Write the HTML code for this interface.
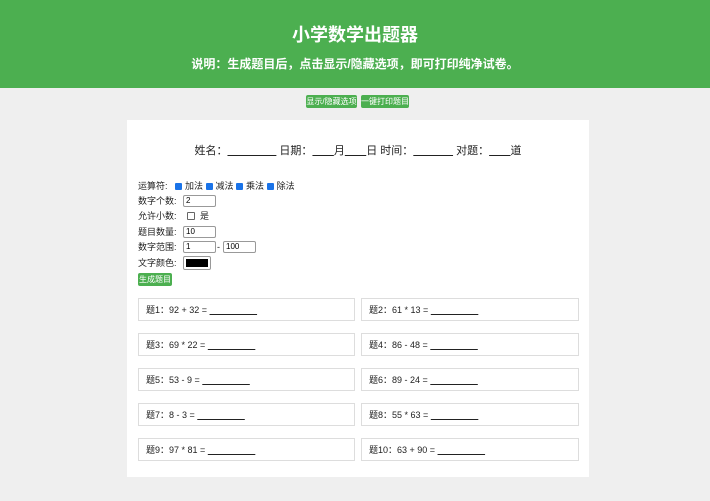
<!DOCTYPE html><html><head><meta charset="utf-8"><style>
body{margin:0;background:#efefef;font-family:"Liberation Sans","Noto Sans CJK SC",sans-serif;width:710px;height:501px;overflow:hidden;position:relative}
.hd{position:absolute;left:0;top:0;width:710px;height:88px;background:#4caf50;color:#fff;text-align:center;font-weight:bold}
.hd .t{position:absolute;top:21px;width:100%;font-size:18px}
.hd .s{position:absolute;top:55px;width:100%;font-size:12px}
.btn{position:absolute;background:#4caf50;color:#fff;font-size:8px;border-radius:2px;height:13px;line-height:13px;text-align:center}
.card{position:absolute;left:127px;top:120px;width:462px;height:357px;background:#fff}
.nm{position:absolute;top:142px;left:0;width:716px;text-align:center;font-size:11px;color:#222}
.row{position:absolute;left:138px;font-size:9px;color:#222;height:13px;line-height:13px}
.in{position:absolute;border:1px solid #999;border-radius:2px;height:10px;font-size:8px;line-height:10px;padding-left:2px;box-sizing:content-box}
.cb{display:inline-block;width:7px;height:7px;background:#1a73e8;border-radius:1px;vertical-align:-1px;margin:0 3px 0 0}
.q{position:absolute;width:215px;height:23px;border:1px solid #ddd;box-sizing:border-box;font-size:9px;line-height:23px;padding-left:7px;color:#222}
</style></head><body>
<div class="hd"><div class="t">小学数学出题器</div><div class="s">说明：生成题目后，点击显示/隐藏选项，即可打印纯净试卷。</div></div>
<div class="btn" style="left:306px;top:95px;width:51px">显示/隐藏选项</div>
<div class="btn" style="left:361px;top:95px;width:48px">一键打印题目</div>
<div class="card"></div>
<div class="nm">姓名：<u>&nbsp;&nbsp;&nbsp;&nbsp;&nbsp;&nbsp;&nbsp;&nbsp;&nbsp;&nbsp;&nbsp;&nbsp;&nbsp;&nbsp;&nbsp;&nbsp;</u> 日期：<u>&nbsp;&nbsp;&nbsp;&nbsp;&nbsp;&nbsp;&nbsp;</u>月<u>&nbsp;&nbsp;&nbsp;&nbsp;&nbsp;&nbsp;&nbsp;</u>日 时间：<u>&nbsp;&nbsp;&nbsp;&nbsp;&nbsp;&nbsp;&nbsp;&nbsp;&nbsp;&nbsp;&nbsp;&nbsp;&nbsp;</u> 对题：<u>&nbsp;&nbsp;&nbsp;&nbsp;&nbsp;&nbsp;&nbsp;</u>道</div>
<div class="row" style="top:180px">运算符: &nbsp;&nbsp;<span class="cb"></span>加法 <span class="cb"></span>减法 <span class="cb"></span>乘法 <span class="cb"></span>除法</div>
<div class="row" style="top:195px">数字个数:</div><div class="in" style="left:183px;top:195px;width:29px">2</div>
<div class="row" style="top:210px">允许小数: &nbsp;&nbsp;&nbsp;<span class="cb" style="background:#fff;border:1px solid #666;width:6px;height:6px"></span> 是</div>
<div class="row" style="top:226px">题目数量:</div><div class="in" style="left:183px;top:226px;width:29px">10</div>
<div class="row" style="top:241px">数字范围:</div><div class="in" style="left:183px;top:241px;width:29px">1</div><div class="row" style="left:217px;top:241px">-</div><div class="in" style="left:223px;top:241px;width:29px">100</div>
<div class="row" style="top:257px">文字颜色:</div><div style="position:absolute;left:183px;top:256px;width:26px;height:12px;border:1px solid #999;border-radius:2px;background:#fff"><div style="margin:2px;height:8px;background:#000"></div></div>
<div class="btn" style="left:138px;top:273px;width:34px;height:13px">生成题目</div>
<div class="q" style="left:138px;top:298px;width:217px">题1：92 + 32 = <u>&nbsp;&nbsp;&nbsp;&nbsp;&nbsp;&nbsp;&nbsp;&nbsp;&nbsp;&nbsp;&nbsp;&nbsp;&nbsp;&nbsp;&nbsp;&nbsp;&nbsp;&nbsp;&nbsp;</u></div>
<div class="q" style="left:361px;top:298px;width:218px">题2：61 * 13 = <u>&nbsp;&nbsp;&nbsp;&nbsp;&nbsp;&nbsp;&nbsp;&nbsp;&nbsp;&nbsp;&nbsp;&nbsp;&nbsp;&nbsp;&nbsp;&nbsp;&nbsp;&nbsp;&nbsp;</u></div>
<div class="q" style="left:138px;top:333px;width:217px">题3：69 * 22 = <u>&nbsp;&nbsp;&nbsp;&nbsp;&nbsp;&nbsp;&nbsp;&nbsp;&nbsp;&nbsp;&nbsp;&nbsp;&nbsp;&nbsp;&nbsp;&nbsp;&nbsp;&nbsp;&nbsp;</u></div>
<div class="q" style="left:361px;top:333px;width:218px">题4：86 - 48 = <u>&nbsp;&nbsp;&nbsp;&nbsp;&nbsp;&nbsp;&nbsp;&nbsp;&nbsp;&nbsp;&nbsp;&nbsp;&nbsp;&nbsp;&nbsp;&nbsp;&nbsp;&nbsp;&nbsp;</u></div>
<div class="q" style="left:138px;top:368px;width:217px">题5：53 - 9 = <u>&nbsp;&nbsp;&nbsp;&nbsp;&nbsp;&nbsp;&nbsp;&nbsp;&nbsp;&nbsp;&nbsp;&nbsp;&nbsp;&nbsp;&nbsp;&nbsp;&nbsp;&nbsp;&nbsp;</u></div>
<div class="q" style="left:361px;top:368px;width:218px">题6：89 - 24 = <u>&nbsp;&nbsp;&nbsp;&nbsp;&nbsp;&nbsp;&nbsp;&nbsp;&nbsp;&nbsp;&nbsp;&nbsp;&nbsp;&nbsp;&nbsp;&nbsp;&nbsp;&nbsp;&nbsp;</u></div>
<div class="q" style="left:138px;top:403px;width:217px">题7：8 - 3 = <u>&nbsp;&nbsp;&nbsp;&nbsp;&nbsp;&nbsp;&nbsp;&nbsp;&nbsp;&nbsp;&nbsp;&nbsp;&nbsp;&nbsp;&nbsp;&nbsp;&nbsp;&nbsp;&nbsp;</u></div>
<div class="q" style="left:361px;top:403px;width:218px">题8：55 * 63 = <u>&nbsp;&nbsp;&nbsp;&nbsp;&nbsp;&nbsp;&nbsp;&nbsp;&nbsp;&nbsp;&nbsp;&nbsp;&nbsp;&nbsp;&nbsp;&nbsp;&nbsp;&nbsp;&nbsp;</u></div>
<div class="q" style="left:138px;top:438px;width:217px">题9：97 * 81 = <u>&nbsp;&nbsp;&nbsp;&nbsp;&nbsp;&nbsp;&nbsp;&nbsp;&nbsp;&nbsp;&nbsp;&nbsp;&nbsp;&nbsp;&nbsp;&nbsp;&nbsp;&nbsp;&nbsp;</u></div>
<div class="q" style="left:361px;top:438px;width:218px">题10：63 + 90 = <u>&nbsp;&nbsp;&nbsp;&nbsp;&nbsp;&nbsp;&nbsp;&nbsp;&nbsp;&nbsp;&nbsp;&nbsp;&nbsp;&nbsp;&nbsp;&nbsp;&nbsp;&nbsp;&nbsp;</u></div>
</body></html>
